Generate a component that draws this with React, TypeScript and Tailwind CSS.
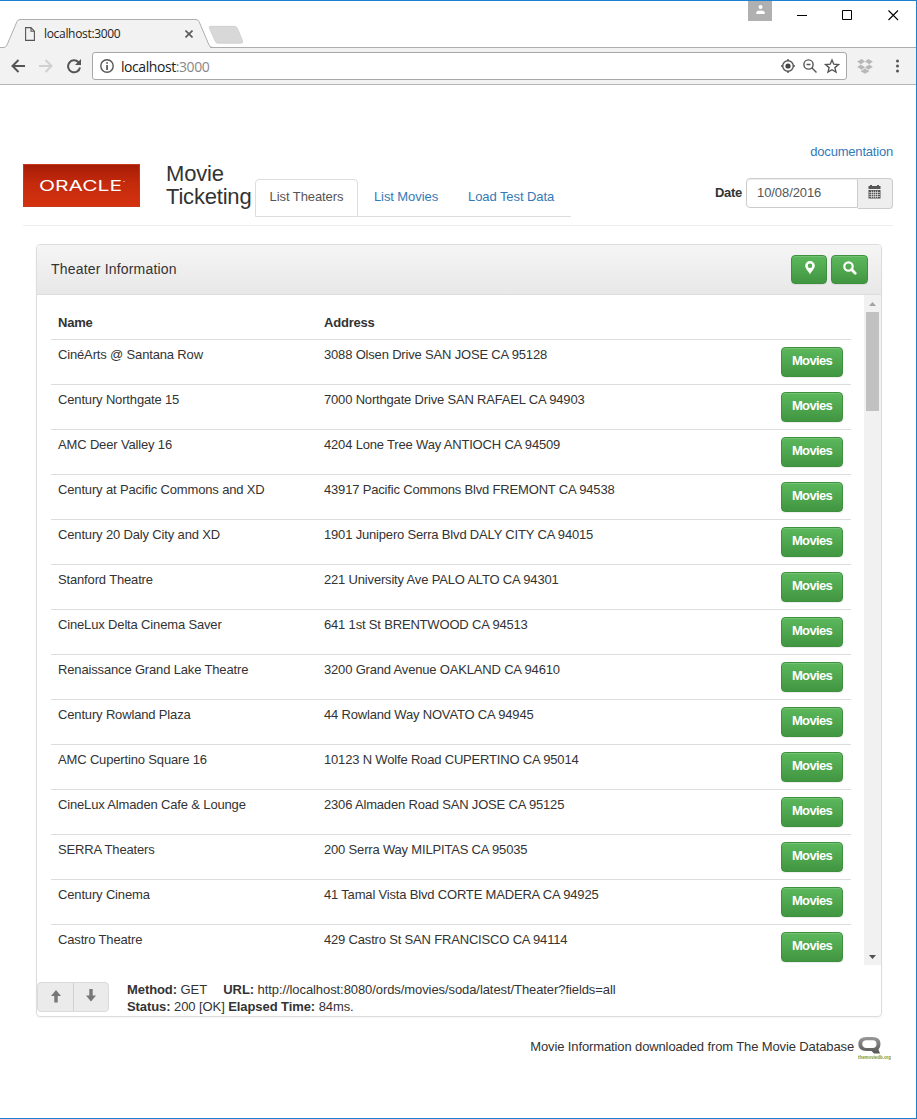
import React from "react";

const theaters: [string, string][] = [
  ["CinéArts @ Santana Row", "3088 Olsen Drive SAN JOSE CA 95128"],
  ["Century Northgate 15", "7000 Northgate Drive SAN RAFAEL CA 94903"],
  ["AMC Deer Valley 16", "4204 Lone Tree Way ANTIOCH CA 94509"],
  ["Century at Pacific Commons and XD", "43917 Pacific Commons Blvd FREMONT CA 94538"],
  ["Century 20 Daly City and XD", "1901 Junipero Serra Blvd DALY CITY CA 94015"],
  ["Stanford Theatre", "221 University Ave PALO ALTO CA 94301"],
  ["CineLux Delta Cinema Saver", "641 1st St BRENTWOOD CA 94513"],
  ["Renaissance Grand Lake Theatre", "3200 Grand Avenue OAKLAND CA 94610"],
  ["Century Rowland Plaza", "44 Rowland Way NOVATO CA 94945"],
  ["AMC Cupertino Square 16", "10123 N Wolfe Road CUPERTINO CA 95014"],
  ["CineLux Almaden Cafe & Lounge", "2306 Almaden Road SAN JOSE CA 95125"],
  ["SERRA Theaters", "200 Serra Way MILPITAS CA 95035"],
  ["Century Cinema", "41 Tamal Vista Blvd CORTE MADERA CA 94925"],
  ["Castro Theatre", "429 Castro St SAN FRANCISCO CA 94114"],
];

const green =
  "flex items-center justify-center rounded-[4px] border border-[#3e8f3e] bg-linear-to-b from-[#5cb85c] to-[#419641] text-white shadow-[inset_0_1px_0_rgba(255,255,255,0.15),0_1px_1px_rgba(0,0,0,0.075)]";

function TabStrip() {
  return (
    <div className="relative flex h-[47px] items-start">
      <svg className="absolute left-0 top-0" width="260" height="47" viewBox="0 0 260 47">
        <path d="M6 47L7.500 44L17.500 20.500Q18 18.500 20 18.500H196Q198 18.500 198.500 20.500L208.500 44L210.500 47Z" fill="#f2f2f2" />
        <path d="M0 46.500H4Q6 46.500 7 44L17 20.500Q18 18.500 20 18.500H196Q198 18.500 199 20.500L209 44Q210 46.500 213 46.500H260" fill="none" stroke="#adadad" />
        <path d="M210.500 25.300H234.500Q236.500 25.300 237.500 27.500L242.500 39.500Q243.500 42.300 241 42.300H218Q216 42.300 215 40L209.500 27.500Q208.500 25.300 210.500 25.300Z" fill="#d8d8d8" stroke="#c4c4c4" strokeWidth=".6" />
      </svg>
      <div className="relative mt-[19px] flex h-[27px] w-[210px] items-center pl-[25px]">
        <svg width="10" height="14" viewBox="0 0 10 14" fill="none" stroke="#555" strokeWidth="1.100">
          <path d="M.6.6h5.400l3.400 3.600v9.200H.6zM6 .6v3.600h3.400" />
        </svg>
        <span className="ml-[9px] text-[12px] tracking-[-0.32px] text-[#222]">localhost:3000</span>
        <svg className="absolute left-[185px] top-[10px]" width="8" height="8" viewBox="0 0 8 8" stroke="#5a5a5a" strokeWidth="1.600">
          <path d="M.5.500l7 7M7.500.5l-7 7" />
        </svg>
      </div>
      <div className="h-full flex-1 border-b border-[#adadad]" />
      <div className="absolute left-[748px] top-0 flex h-[20px] w-[24px] justify-center bg-[#b0b0b0]">
        <svg className="mt-[4px]" width="9" height="9" viewBox="0 0 9 9" fill="#fff">
          <circle cx="4.500" cy="2" r="2" />
          <path d="M.3 9V7.500Q.3 5.500 4.500 5.500T8.700 7.500V9z" />
        </svg>
      </div>
      <svg className="absolute left-[796px] top-[8px]" width="104" height="13" viewBox="0 0 104 13" fill="none" stroke="#000">
        <path d="M1 6.500H11M46.500 1.500h9v9h-9z" />
        <path d="M92.500 1.500l9.500 9.500M102 1.500L92.500 11" strokeWidth="1.100" />
      </svg>
    </div>
  );
}

function Toolbar() {
  return (
    <div className="flex h-[37px] items-center border-b border-[#b5b5b5] bg-[#f2f2f2] pl-[11px]">
      <svg width="72" height="16" viewBox="0 0 72 16" fill="none" strokeWidth="2">
        <path d="M14 8H2M7.500 2L1.500 8l6 6" stroke="#555" />
        <path d="M28 8h12M34.500 2l6 6-6 6" stroke="#d0d0d0" />
        <path d="M67.500 4.200A6 6 0 1 0 69 9.500" stroke="#555" />
        <path d="M70 1v6h-6z" fill="#555" />
      </svg>
      <div className="ml-[9px] flex h-[28px] w-[755px] items-center rounded-[3px] border border-[#a8a8a8] bg-white">
        <svg className="ml-[7px]" width="14" height="14" viewBox="0 0 14 14">
          <circle cx="7" cy="7" r="6.200" fill="none" stroke="#555" strokeWidth="1.400" />
          <path d="M6.200 3.200h1.700v1.600H6.200zM6.200 6h1.700v5H6.200z" fill="#555" />
        </svg>
        <span className="ml-[7px] flex-1 text-[14px] tracking-[-0.43px] text-[#222]">
          localhost<span className="text-[#888]">:3000</span>
        </span>
        <svg className="mr-[6px]" width="60" height="16" viewBox="0 0 60 16" fill="none" stroke="#555" strokeWidth="1.400">
          <circle cx="8" cy="8" r="5.300" />
          <circle cx="8" cy="8" r="2.600" fill="#444" stroke="none" />
          <path d="M8 1v2M8 13v2M1 8h2M13 8h2" />
          <circle cx="28.500" cy="6.500" r="4.600" />
          <path d="M31.800 9.800l4.700 4.700M26.500 6.500h4" />
          <path d="M52 2l1.800 4.200 4.600.4-3.500 3 1.100 4.500-4-2.400-4 2.400 1.100-4.500-3.500-3 4.600-.4z" />
        </svg>
      </div>
      <svg className="ml-[10px]" width="16" height="15" viewBox="0 0 16 15" fill="#b8b8b8">
        <path d="M4.700 0L8 2.500 3.800 5.200.2 2.600zM11.300 0L8 2.500l4.200 2.700 3.600-2.600zM3.800 5.500L8 8.200l-3.300 2.500L.2 8zM12.200 5.500L8 8.200l3.300 2.500L15.800 8zM4 11.200l.8.500L8 9.300l3.200 2.400.8-.5v1.200L8 14.700l-4-2.300z" />
      </svg>
      <svg className="ml-[22px]" width="4" height="14" viewBox="0 0 4 14" fill="#555">
        <circle cx="2.500" cy="2" r="1.500" /><circle cx="2.500" cy="7" r="1.500" /><circle cx="2.500" cy="12" r="1.500" />
      </svg>
    </div>
  );
}

function Oracle() {
  return (
    <div className="flex h-[43px] w-[117px] items-center justify-center border border-[#c8371a] bg-linear-to-b from-[#a61c07] via-[#c42a0c] via-45% to-[#d4320f]">
      <svg width="87" height="18" viewBox="0 0 87 18" fill="#fff" fontFamily="Inter, sans-serif">
        <text x="1" y="14.300" fontSize="15" fontWeight="400" textLength="83" lengthAdjust="spacingAndGlyphs">ORACLE</text>
        <circle cx="86" cy="4.500" r=".6" />
      </svg>
    </div>
  );
}

function PageHeader() {
  return (
    <header className="mx-[23px] border-b border-[#eee]">
      <div className="mt-[58px] flex h-[18px] items-center justify-end text-[13px] tracking-[-0.2px] text-[#337ab7]">documentation</div>
      <div className="flex h-[64px] items-start">
        <div className="pt-[3px]"><Oracle /></div>
        <h1 className="ml-[26px] w-[89px] pt-[1px] text-[22px] leading-[23px] tracking-[-0.2px]">Movie Ticketing</h1>
        <nav className="mt-[18px] flex h-[38px] text-[13px] tracking-[-0.08px] text-[#337ab7]">
          <span className="flex w-[103px] items-center justify-center rounded-t-[4px] border border-[#ddd] pb-[2px] text-[#555]">List Theaters</span>
          <span className="flex w-[96px] items-center justify-center border-b border-[#ddd] pb-[1px]">List Movies</span>
          <span className="flex w-[117px] items-center border-b border-[#ddd] pb-[1px] pl-[14px]">Load Test Data</span>
        </nav>
        <div className="ml-auto mt-[17px] flex items-start text-[13px]">
          <b className="mt-[6px] leading-[18px] tracking-[-0.3px]">Date</b>
          <div className="ml-[4px] h-[30px] w-[112px] rounded-l-[4px] border border-[#ccc] pl-[10px] leading-[28px] tracking-[-0.08px] text-[#555] shadow-[inset_0_1px_1px_rgba(0,0,0,0.075)]">10/08/2016</div>
          <div className="flex h-[31px] w-[35px] justify-center rounded-r-[4px] border border-l-0 border-[#ccc] bg-[#eee] pr-[2px] pt-[6px]">
            <svg width="13" height="14" viewBox="0 0 13 14" fill="#555">
              <path d="M2 0h2v1h5V0h2v1h1.500v3H.5V1H2zM.5 5h12v8.500H.5z" />
              <path d="M1 7.500h11M1 9.500h11M1 11.500h11M3.500 5.500v7.500M5.500 5.500v7.500M7.500 5.500v7.500M9.500 5.500v7.500" stroke="#eee" strokeWidth=".6" />
            </svg>
          </div>
        </div>
      </div>
    </header>
  );
}

function Panel() {
  return (
    <section className="ml-[36px] mt-[18px] flex h-[773px] w-[846px] flex-col rounded-[4px] border border-[#ddd] shadow-[0_1px_2px_rgba(0,0,0,0.05)]">
      <div className="flex h-[50px] shrink-0 items-center gap-[4px] rounded-t-[3px] border-b border-[#ddd] bg-linear-to-b from-[#f5f5f5] to-[#e8e8e8] pl-[14px] pr-[13px]">
        <h2 className="flex-1 text-[14px] tracking-[0.19px]">Theater Information</h2>
        <button className={`${green} h-[29px] w-[36px] pb-[3px] pl-[2px]`}>
          <svg width="10" height="14" viewBox="0 0 10 14" fill="#fff">
            <path fillRule="evenodd" d="M5 0a4.800 4.800 0 0 1 4.800 4.800C9.800 8 6.200 10.500 5 13.500 3.800 10.500.2 8 .2 4.800A4.800 4.800 0 0 1 5 0zm0 2.500a2.300 2.300 0 1 0 0 4.600 2.300 2.300 0 0 0 0-4.600z" />
          </svg>
        </button>
        <button className={`${green} h-[29px] w-[37px] pb-[3px]`}>
          <svg width="14" height="14" viewBox="0 0 14 14" fill="none" stroke="#fff" strokeWidth="2.200">
            <circle cx="5.500" cy="5.500" r="4.200" /><path d="M8.600 8.600l3.600 3.600" strokeWidth="2.800" strokeLinecap="round" />
          </svg>
        </button>
      </div>
      <div className="flex h-[670px] shrink-0 overflow-hidden">
        <div className="ml-[14px] w-[800px] text-[13px]">
          <div className="grid h-[44px] grid-cols-[266px_1fr] pl-[7px] pt-[18px] font-bold leading-[19px] tracking-[-0.2px]">
            <span>Name</span><span>Address</span>
          </div>
          {theaters.map(([name, address]) => (
            <div key={name} className="grid h-[45px] grid-cols-[266px_1fr_62px] border-t border-[#ddd] pl-[7px] pr-[8px] pt-[7px]">
              <span className="leading-[16px] tracking-[-0.155px]">{name}</span>
              <span className="leading-[16px] tracking-[-0.178px]">{address}</span>
              <button className={`${green} h-[30px] pb-[2px] text-[13px] font-bold tracking-[-0.65px]`}>Movies</button>
            </div>
          ))}
        </div>
        <div className="ml-auto flex w-[17px] flex-col items-center bg-[#f1f1f1]">
          <svg width="17" height="17" viewBox="0 0 17 17" fill="#a3a3a3"><path d="M5 11h7L8.500 7z" /></svg>
          <div className="h-[99px] w-[13px] bg-[#c1c1c1]" />
          <svg className="mt-auto" width="17" height="17" viewBox="0 0 17 17" fill="#505050"><path d="M5 7h7l-3.500 4z" /></svg>
        </div>
      </div>
      <div className="flex pt-[16px] text-[13px]">
        <div className="mt-[1px] flex h-[30px] w-[72px] rounded-[4px] border border-[#dbdbdb] bg-[#ebebeb]">
          <span className="flex w-[36px] justify-center border-r border-[#d0d0d0] pt-[7px]">
            <svg width="12" height="13" viewBox="0 0 12 13" fill="#777"><path d="M6 0l5 6H7.700v6.500H4.300V6H1z" /></svg>
          </span>
          <span className="flex flex-1 justify-center pt-[6px]">
            <svg width="12" height="13" viewBox="0 0 12 13" fill="#777"><path d="M6 12.500L1 6.500h3.300V0h3.400v6.500H11z" /></svg>
          </span>
        </div>
        <div className="ml-[18px] leading-[17px] tracking-[-0.08px]">
          <div><b>Method:</b> GET <b className="ml-[13px]">URL:</b> http://localhost:8080/ords/movies/soda/latest/Theater?fields=all</div>
          <div><b>Status:</b> 200 [OK] <b>Elapsed Time:</b> 84ms.</div>
        </div>
      </div>
    </section>
  );
}

export default function App() {
  return (
    <div className="h-[1119px] w-[917px] overflow-hidden border-b border-r border-t border-[#1b80d2] bg-white font-['Liberation_Sans',Arial,sans-serif] text-[#333]">
      <div className="font-['Open_Sans',sans-serif]">
        <TabStrip />
        <Toolbar />
      </div>
      <PageHeader />
      <Panel />
      <footer className="mr-[24px] mt-[18px] flex items-start justify-end text-[13px]">
        <span className="mt-[2px] leading-[19px] tracking-[-0.12px]">Movie Information downloaded from The Movie Database</span>
        <svg className="ml-[4px] overflow-visible" width="34" height="30" viewBox="0 0 34 30">
          <defs><linearGradient id="bubble" x2="0" y2="1"><stop stopColor="#999" /><stop offset="1" stopColor="#555" /></linearGradient></defs>
          <path fill="url(#bubble)" fillRule="evenodd" d="M8.500 2h6q8 0 8 7 0 3.500-2 5.500l1.500 4H16l-2.500-2.500h-5Q.3 16 .3 9T8.500 2zm0 3.300q-4.200 0-4.200 3.700t4.200 4h6q4 0 4-4t-4-3.700z" />
          <text x="0" y="23.500" fontSize="5.500" fontWeight="bold" fill="#7f962c" textLength="33" lengthAdjust="spacingAndGlyphs">themoviedb.org</text>
        </svg>
      </footer>
    </div>
  );
}
